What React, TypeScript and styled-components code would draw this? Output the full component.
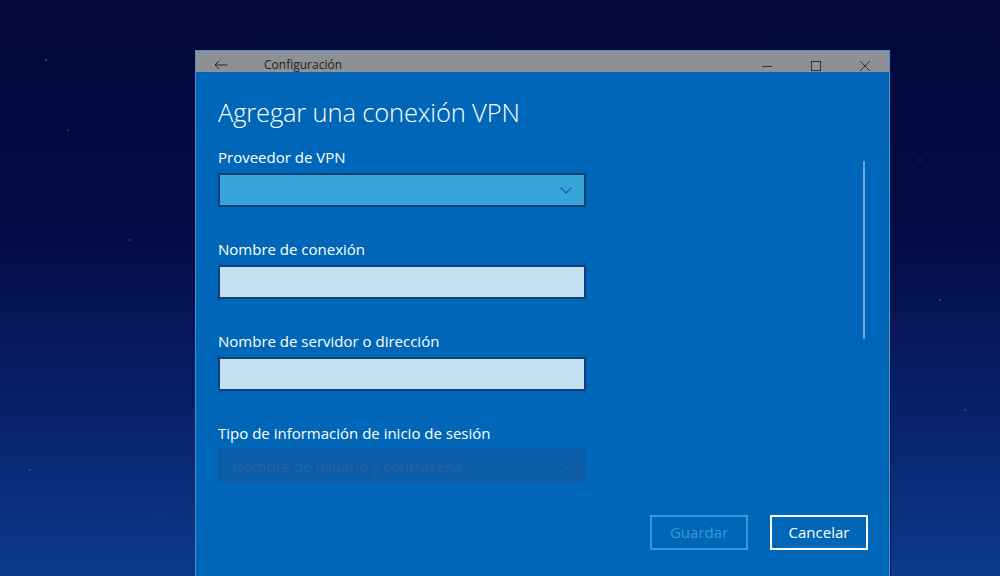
import React from "react";
import styled, { createGlobalStyle } from "styled-components";

const GlobalStyle = createGlobalStyle`
  html, body {
    margin: 0;
    padding: 0;
    height: 100%;
    overflow: hidden;
  }
  body {
    font-family: "Open Sans", "Noto Sans", sans-serif;
    background:
      radial-gradient(circle at 46px 60px, rgba(120,140,220,0.35) 0 1px, transparent 1.5px),
      radial-gradient(circle at 130px 240px, rgba(120,140,220,0.3) 0 1px, transparent 1.5px),
      radial-gradient(circle at 68px 130px, rgba(120,140,220,0.25) 0 1px, transparent 1.5px),
      radial-gradient(circle at 940px 300px, rgba(120,140,220,0.3) 0 1px, transparent 1.5px),
      radial-gradient(circle at 965px 410px, rgba(120,140,220,0.3) 0 1px, transparent 1.5px),
      radial-gradient(circle at 30px 470px, rgba(120,140,220,0.3) 0 1px, transparent 1.5px),
      radial-gradient(circle at 160px 520px, rgba(120,140,220,0.3) 0 1px, transparent 1.5px),
      radial-gradient(circle at 920px 160px, rgba(120,140,220,0.25) 0 1px, transparent 1.5px),
      linear-gradient(180deg, #03073a 0%, #040b45 40%, #082068 70%, #0c3a8c 100%);
  }
`;

const Desktop = styled.div`
  height: 576px;
  padding: 50px 0 0 195px;
  box-sizing: border-box;
`;

const Window = styled.div`
  width: 695px;
  height: 526px;
  box-sizing: border-box;
  border: 1px solid #4f8fc8;
  border-bottom: none;
  background: #0067b8;
  display: flex;
  flex-direction: column;
  box-shadow: 1px 0 0 #061a4a;
`;

const TitleBar = styled.div`
  height: 21px;
  box-sizing: border-box;
  padding-top: 7px;
  background: #8d9094;
  display: flex;
  align-items: flex-start;
  color: #1e1e1e;
  font-size: 12px;
`;

const BackButton = styled.div`
  width: 68px;
  height: 14px;
  display: flex;
  align-items: center;
  padding-left: 18px;
  box-sizing: border-box;
`;

const WindowTitle = styled.div`
  flex: 1;
  line-height: 14px;
`;

const Controls = styled.div`
  display: flex;
  align-items: center;
`;

const ControlButton = styled.div`
  width: 49px;
  height: 16px;
  display: flex;
  align-items: center;
  justify-content: center;
`;

const Body = styled.div`
  flex: 1;
  display: flex;
  padding: 23px 0 0 22px;
  position: relative;
`;

const Form = styled.div`
  width: 368px;
  display: flex;
  flex-direction: column;
`;

const Heading = styled.h1`
  margin: 0 0 18px;
  font-size: 25.5px;
  font-weight: 300;
  color: #ffffff;
  line-height: 34px;
  letter-spacing: -0.15px;
`;

const Field = styled.div`
  display: flex;
  flex-direction: column;
  margin-bottom: 32px;
`;

const Label = styled.label`
  color: #ffffff;
  font-size: 15px;
  line-height: 20px;
  margin-bottom: 6px;
`;

const Box = styled.div<{ $variant: "select" | "input" | "disabled" }>`
  height: 34px;
  box-sizing: border-box;
  display: flex;
  align-items: center;
  justify-content: space-between;
  padding: 0 12px;
  font-size: 15px;
  border: 2px solid
    ${(p) => (p.$variant === "disabled" ? "transparent" : "#143f73")};
  background: ${(p) =>
    p.$variant === "select"
      ? "#37a4da"
      : p.$variant === "input"
      ? "#c3e1f3"
      : "#0a5da6"};
  color: ${(p) => (p.$variant === "disabled" ? "#2563a2" : "#1a1a1a")};
`;

const Chevron = ({ color }: { color: string }) => (
  <svg width="12" height="7" viewBox="0 0 12 7">
    <path d="M0.5 0.5 L6 6 L11.5 0.5" fill="none" stroke={color} strokeWidth="1.2" />
  </svg>
);

const Scrollbar = styled.div`
  position: absolute;
  right: 24px;
  top: 89px;
  width: 2px;
  height: 178px;
  background: #6ea9da;
  border-radius: 1px;
`;

const Buttons = styled.div`
  position: absolute;
  right: 21px;
  top: 443px;
  display: flex;
  gap: 22px;
`;

const Button = styled.button<{ $disabled?: boolean }>`
  width: 98px;
  height: 35px;
  box-sizing: border-box;
  background: transparent;
  font-family: inherit;
  font-size: 15px;
  border: 2px solid ${(p) => (p.$disabled ? "#3b97d6" : "#ffffff")};
  color: ${(p) => (p.$disabled ? "#3d96d3" : "#ffffff")};
  padding: 0 0 1px;
`;

export default function App() {
  return (
    <>
      <GlobalStyle />
      <Desktop>
        <Window>
          <TitleBar>
            <BackButton>
              <svg width="14" height="10" viewBox="0 0 14 10">
                <path d="M13.5 5 H1 M5 1 L1 5 L5 9" fill="none" stroke="#222" strokeWidth="1" />
              </svg>
            </BackButton>
            <WindowTitle>Configuración</WindowTitle>
            <Controls>
              <ControlButton>
                <svg width="12" height="10" viewBox="0 0 12 10">
                  <path d="M1 5.5 H11" stroke="#333" strokeWidth="1" />
                </svg>
              </ControlButton>
              <ControlButton>
                <svg width="12" height="12" viewBox="0 0 12 12">
                  <rect x="1.5" y="1.5" width="9" height="9" fill="none" stroke="#333" strokeWidth="1" />
                </svg>
              </ControlButton>
              <ControlButton>
                <svg width="12" height="12" viewBox="0 0 12 12">
                  <path d="M1 1 L11 11 M11 1 L1 11" stroke="#333" strokeWidth="1" />
                </svg>
              </ControlButton>
            </Controls>
          </TitleBar>
          <Body>
            <Form>
              <Heading>Agregar una conexión VPN</Heading>
              <Field>
                <Label>Proveedor de VPN</Label>
                <Box $variant="select">
                  <span />
                  <Chevron color="#1c5f92" />
                </Box>
              </Field>
              <Field>
                <Label>Nombre de conexión</Label>
                <Box $variant="input" />
              </Field>
              <Field>
                <Label>Nombre de servidor o dirección</Label>
                <Box $variant="input" />
              </Field>
              <Field>
                <Label>Tipo de información de inicio de sesión</Label>
                <Box $variant="disabled">
                  <span>Nombre de usuario y contraseña</span>
                  <Chevron color="#2563a2" />
                </Box>
              </Field>
            </Form>
            <Scrollbar />
            <Buttons>
              <Button $disabled>Guardar</Button>
              <Button>Cancelar</Button>
            </Buttons>
          </Body>
        </Window>
      </Desktop>
    </>
  );
}
